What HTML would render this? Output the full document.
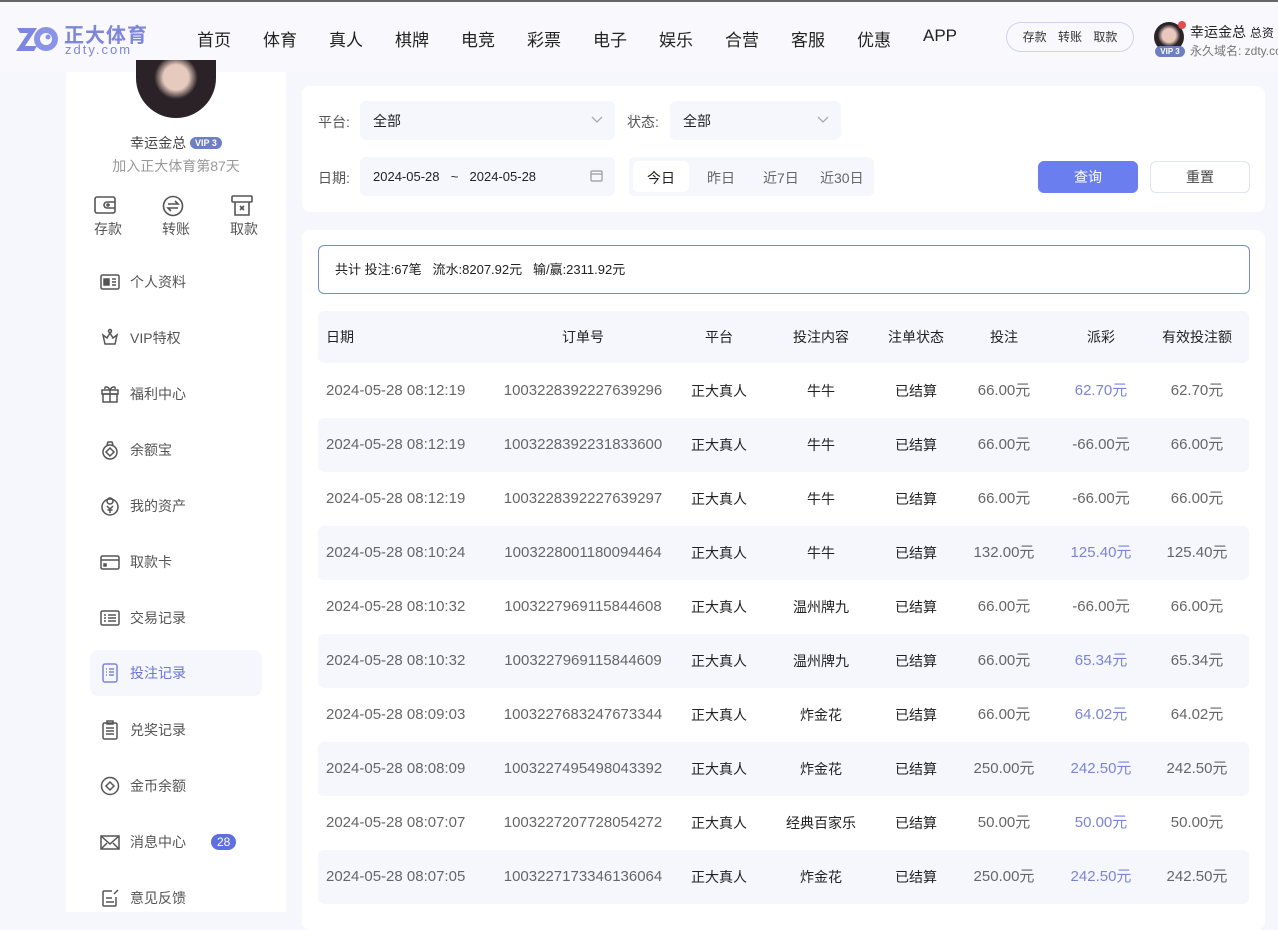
<!DOCTYPE html>
<html><head><meta charset="utf-8"><style>
*{margin:0;padding:0;box-sizing:border-box}
body{width:1278px;height:912px;overflow:hidden;background:#f6f7fc;font-family:"Liberation Sans","Noto Sans CJK SC",sans-serif;color:#333;position:relative}
.abs{position:absolute}
.hdr{left:0;top:0;width:1278px;height:72px;background:#f9f9fd;border-top:2px solid #666}
.nav span{position:absolute;top:24px;font-size:17px;color:#222}
.side{left:66px;top:72px;width:220px;height:840px;background:#fff}
.mi{position:absolute;left:24px;width:172px;height:46px;font-size:14px;color:#555;display:flex;align-items:center;padding-left:10px}
.mi svg{width:20px;height:20px;margin-right:10px;flex:none}
.card{background:#fff;border-radius:8px}
.sel{position:absolute;background:#f6f7fd;border-radius:6px;font-size:14px;color:#222;padding-left:13px;display:flex;align-items:center}
.lbl{position:absolute;font-size:14px;color:#555}
.row{position:absolute;left:318px;width:931px;height:54px;font-size:15px;border-radius:6px}
.row span{position:absolute;top:0;line-height:54px;white-space:nowrap;transform:translateX(-50%)}
.row span.k{font-size:14px}
.g{color:#666}.b{color:#7b84d6}.k{color:#222}
</style></head><body>
<div class="abs hdr">
 <svg class="abs" style="left:15px;top:22px" width="44" height="30" viewBox="0 0 44 30"><path d="M2 4h20l-12 18h12l-3 5H1l12-18H5z" fill="#7d86e0"/><circle cx="31" cy="15" r="12" fill="#8b93e8"/><circle cx="31" cy="15" r="6" fill="#f9f9fd"/><circle cx="33" cy="13" r="2.5" fill="#8b93e8"/></svg>
 <div class="abs" style="left:64px;top:17px;font-size:20px;color:#7d86d8;font-weight:bold;letter-spacing:1px">正大体育</div>
 <div class="abs" style="left:65px;top:40px;font-size:13px;color:#7d86d8;letter-spacing:2px">zdty.com</div>
 <div class="nav">
 <span style="left:197px">首页</span><span style="left:263px">体育</span><span style="left:329px">真人</span><span style="left:395px">棋牌</span><span style="left:461px">电竞</span><span style="left:527px">彩票</span><span style="left:593px">电子</span><span style="left:659px">娱乐</span><span style="left:725px">合营</span><span style="left:791px">客服</span><span style="left:857px">优惠</span><span style="left:923px">APP</span>
 </div>
 <div class="abs" style="left:1006px;top:20px;width:128px;height:30px;border:1px solid #cfd2ec;border-radius:15px;font-size:12px;color:#333;line-height:28px;text-align:center;word-spacing:8px">存款 转账 取款</div>
 <div class="abs" style="left:1154px;top:20px;width:30px;height:30px;border-radius:50%;background:radial-gradient(circle at 50% 45%,#e8c8bc 0 30%,#2a2428 50%)"></div>
 <div class="abs" style="left:1178px;top:19px;width:8px;height:8px;border-radius:50%;background:#e05050"></div>
 <div class="abs" style="left:1155px;top:44px;width:30px;height:11px;border-radius:6px;background:#6d7fc0;color:#fff;font-size:8px;line-height:11px;text-align:center;font-weight:bold">VIP 3</div>
 <div class="abs" style="left:1190px;top:20px;font-size:14px;color:#222;white-space:nowrap">幸运金总 <span style="font-size:12px">总资</span></div>
 <div class="abs" style="left:1190px;top:40px;font-size:12px;color:#777;white-space:nowrap">永久域名: zdty.com</div>
</div>
<div class="abs side">
 <div class="abs" style="left:70px;top:-12px;width:80px;height:58px;border-radius:0 0 40px 40px;background:radial-gradient(circle at 50% 30%,#e6cabd 0 22%,#2a2226 38%)"></div>
 <div class="abs" style="left:0;top:61px;width:220px;text-align:center;font-size:14px;color:#444">幸运金总 <span style="display:inline-block;background:#6d7fc0;color:#fff;font-size:9px;border-radius:7px;padding:0 5px;line-height:12px;vertical-align:2px;font-weight:bold">VIP 3</span></div>
 <div class="abs" style="left:0;top:84px;width:220px;text-align:center;font-size:14px;color:#999">加入正大体育第87天</div>
 <svg class="abs" style="left:28px;top:124px" width="22" height="18" viewBox="0 0 22 18" fill="none" stroke="#555" stroke-width="1.6"><rect x="1" y="1" width="20" height="16" rx="2"/><path d="M21 6h-8a3 3 0 000 6h8"/><circle cx="14" cy="9" r="1"/></svg>
 <svg class="abs" style="left:96px;top:123px" width="22" height="22" viewBox="0 0 22 22" fill="none" stroke="#555" stroke-width="1.6"><circle cx="11" cy="11" r="9.5"/><path d="M6 9h10l-3-3M16 13H6l3 3"/></svg>
 <svg class="abs" style="left:165px;top:123px" width="22" height="22" viewBox="0 0 22 22" fill="none" stroke="#555" stroke-width="1.6"><rect x="1" y="1" width="20" height="6" rx="1"/><path d="M4 7v13h14V7"/><path d="M9 11l4 4M13 11l-4 4"/></svg>
 <div class="abs" style="left:28px;top:147px;font-size:14px;color:#555">存款</div>
 <div class="abs" style="left:96px;top:147px;font-size:14px;color:#555">转账</div>
 <div class="abs" style="left:164px;top:147px;font-size:14px;color:#555">取款</div>
 <div class="mi" style="top:187px"><svg viewBox="0 0 20 20" fill="none" stroke="#555" stroke-width="1.5"><rect x="1" y="3" width="18" height="14" rx="1.5"/><rect x="4" y="7" width="5" height="6" fill="#555"/><path d="M12 7h4M12 10h4M12 13h4"/></svg>个人资料</div>
 <div class="mi" style="top:243px"><svg viewBox="0 0 20 20" fill="none" stroke="#555" stroke-width="1.5"><path d="M3 7l4 3 3-5 3 5 4-3-2 9H5z"/><circle cx="10" cy="3" r="1.5"/></svg>VIP特权</div>
 <div class="mi" style="top:299px"><svg viewBox="0 0 20 20" fill="none" stroke="#555" stroke-width="1.5"><rect x="2" y="6" width="16" height="4"/><rect x="3" y="10" width="14" height="8"/><path d="M10 6v12M10 6c-2-4-6-4-5-1M10 6c2-4 6-4 5-1"/></svg>福利中心</div>
 <div class="mi" style="top:355px"><svg viewBox="0 0 20 20" fill="none" stroke="#555" stroke-width="1.5"><circle cx="10" cy="12" r="7"/><path d="M10 8l4 4-4 4-4-4z"/><path d="M7 5l1-3h4l1 3"/></svg>余额宝</div>
 <div class="mi" style="top:411px"><svg viewBox="0 0 20 20" fill="none" stroke="#555" stroke-width="1.5"><circle cx="10" cy="11" r="8"/><circle cx="10" cy="5" r="3"/><path d="M7 10l3 3 3-3M10 13v4M7.5 14h5"/></svg>我的资产</div>
 <div class="mi" style="top:467px"><svg viewBox="0 0 20 20" fill="none" stroke="#555" stroke-width="1.5"><rect x="1" y="4" width="18" height="13" rx="1.5"/><path d="M1 8h18"/><rect x="4" y="12" width="2" height="2" fill="#555"/></svg>取款卡</div>
 <div class="mi" style="top:523px"><svg viewBox="0 0 20 20" fill="none" stroke="#555" stroke-width="1.5"><rect x="1" y="3" width="18" height="14" rx="1.5"/><path d="M4 7h2M8 7h8M4 10h2M8 10h8M4 13h2M8 13h8"/></svg>交易记录</div>
 <div class="mi" style="top:578px;background:#f6f7fd;border-radius:8px;color:#6b74d8"><svg viewBox="0 0 20 20" fill="none" stroke="#7b84d6" stroke-width="1.5"><rect x="3" y="1" width="14" height="18" rx="2"/><path d="M6 6h1M9 6h5M6 9h1M9 9h5M6 12h1M9 12h5"/></svg>投注记录</div>
 <div class="mi" style="top:635px"><svg viewBox="0 0 20 20" fill="none" stroke="#555" stroke-width="1.5"><rect x="3" y="3" width="14" height="16" rx="1.5"/><rect x="7" y="1" width="6" height="3"/><path d="M6 8h8M6 11h8M6 14h8"/></svg>兑奖记录</div>
 <div class="mi" style="top:691px"><svg viewBox="0 0 20 20" fill="none" stroke="#555" stroke-width="1.5"><circle cx="10" cy="10" r="8.5"/><path d="M10 6l4 4-4 4-4-4z"/></svg>金币余额</div>
 <div class="mi" style="top:747px"><svg viewBox="0 0 20 20" fill="none" stroke="#555" stroke-width="1.5"><rect x="1" y="4" width="18" height="13"/><path d="M1 4l9 8 9-8M1 17l6-6M19 17l-6-6"/></svg>消息中心<span style="margin-left:25px;background:#5f6ee0;color:#fff;font-size:12px;border-radius:8px;padding:0 6px;line-height:16px">28</span></div>
 <div class="mi" style="top:803px"><svg viewBox="0 0 20 20" fill="none" stroke="#555" stroke-width="1.5"><path d="M16 9v8a1 1 0 01-1 1H4a1 1 0 01-1-1V4a1 1 0 011-1h8"/><path d="M6 10h6M6 14h8M14 6l4-4"/></svg>意见反馈</div>
</div>
<div class="abs card" style="left:302px;top:86px;width:963px;height:126px"></div>
<div class="lbl" style="left:318px;top:112px">平台:</div>
<div class="sel" style="left:360px;top:101px;width:255px;height:39px">全部<svg class="abs" style="right:12px;top:15px" width="12" height="8" viewBox="0 0 12 8" fill="none" stroke="#aaa" stroke-width="1.3"><path d="M1 1l5 5 5-5"/></svg></div>
<div class="lbl" style="left:627px;top:112px">状态:</div>
<div class="sel" style="left:670px;top:101px;width:171px;height:39px">全部<svg class="abs" style="right:12px;top:15px" width="12" height="8" viewBox="0 0 12 8" fill="none" stroke="#aaa" stroke-width="1.3"><path d="M1 1l5 5 5-5"/></svg></div>
<div class="lbl" style="left:318px;top:168px">日期:</div>
<div class="sel" style="left:360px;top:157px;width:255px;height:39px;font-size:13px;word-spacing:2px">2024-05-28 &nbsp;~ &nbsp;2024-05-28<svg class="abs" style="right:12px;top:13px" width="13" height="12" viewBox="0 0 13 12" fill="none" stroke="#999" stroke-width="1.2"><rect x="1" y="1" width="11" height="10" rx="1"/><path d="M1 4h11"/></svg></div>
<div class="sel" style="left:629px;top:157px;width:245px;height:39px;padding:0"></div>
<div class="abs" style="left:633px;top:161px;width:56px;height:31px;background:#fff;border-radius:5px"></div>
<div class="abs" style="left:647px;top:168px;font-size:14px;color:#222">今日</div>
<div class="abs" style="left:707px;top:168px;font-size:14px;color:#666">昨日</div>
<div class="abs" style="left:763px;top:168px;font-size:14px;color:#666">近7日</div>
<div class="abs" style="left:820px;top:168px;font-size:14px;color:#666">近30日</div>
<div class="abs" style="left:1038px;top:161px;width:100px;height:32px;background:#6a7ef0;border-radius:6px;color:#fff;font-size:14px;line-height:32px;text-align:center">查询</div>
<div class="abs" style="left:1150px;top:161px;width:100px;height:32px;background:#fff;border:1px solid #e0e3f0;border-radius:6px;color:#444;font-size:14px;line-height:30px;text-align:center">重置</div>
<div class="abs card" style="left:302px;top:230px;width:963px;height:700px"></div>
<div class="abs" style="left:318px;top:245px;width:932px;height:49px;border:1px solid #7b8ad0;border-radius:6px;font-size:13px;color:#222;line-height:47px;padding-left:16px">共计 投注:67笔 &nbsp;&nbsp;流水:8207.92元 &nbsp;&nbsp;输/赢:2311.92元</div>
<div class="row k" style="top:311px;height:52px;background:#f6f7fd;font-size:14px"><span style="left:8px;transform:none;line-height:52px">日期</span><span style="left:265px;line-height:52px">订单号</span><span style="left:401px;line-height:52px">平台</span><span style="left:503px;line-height:52px">投注内容</span><span style="left:598px;line-height:52px">注单状态</span><span style="left:686px;line-height:52px">投注</span><span style="left:783px;line-height:52px">派彩</span><span style="left:879px;line-height:52px">有效投注额</span></div>
<div id="rows"></div>
<script>
var d=[["08:12:19","1003228392227639296","牛牛","66.00","62.70",1,"62.70"],["08:12:19","1003228392231833600","牛牛","66.00","-66.00",0,"66.00"],["08:12:19","1003228392227639297","牛牛","66.00","-66.00",0,"66.00"],["08:10:24","1003228001180094464","牛牛","132.00","125.40",1,"125.40"],["08:10:32","1003227969115844608","温州牌九","66.00","-66.00",0,"66.00"],["08:10:32","1003227969115844609","温州牌九","66.00","65.34",1,"65.34"],["08:09:03","1003227683247673344","炸金花","66.00","64.02",1,"64.02"],["08:08:09","1003227495498043392","炸金花","250.00","242.50",1,"242.50"],["08:07:07","1003227207728054272","经典百家乐","50.00","50.00",1,"50.00"],["08:07:05","1003227173346136064","炸金花","250.00","242.50",1,"242.50"]];
var h="";d.forEach(function(r,i){h+='<div class="row" style="top:'+(364+i*54)+'px;'+(i%2?'background:#f6f7fd':'')+'"><span class="g" style="left:8px;transform:none">2024-05-28 '+r[0]+'</span><span class="g" style="left:265px">'+r[1]+'</span><span class="k" style="left:401px">正大真人</span><span class="k" style="left:503px">'+r[2]+'</span><span class="k" style="left:598px">已结算</span><span class="g" style="left:686px">'+r[3]+'元</span><span class="'+(r[5]?'b':'g')+'" style="left:783px">'+r[4]+'元</span><span class="g" style="left:879px">'+r[6]+'元</span></div>'});
document.getElementById("rows").innerHTML=h;
</script>
</body></html>
